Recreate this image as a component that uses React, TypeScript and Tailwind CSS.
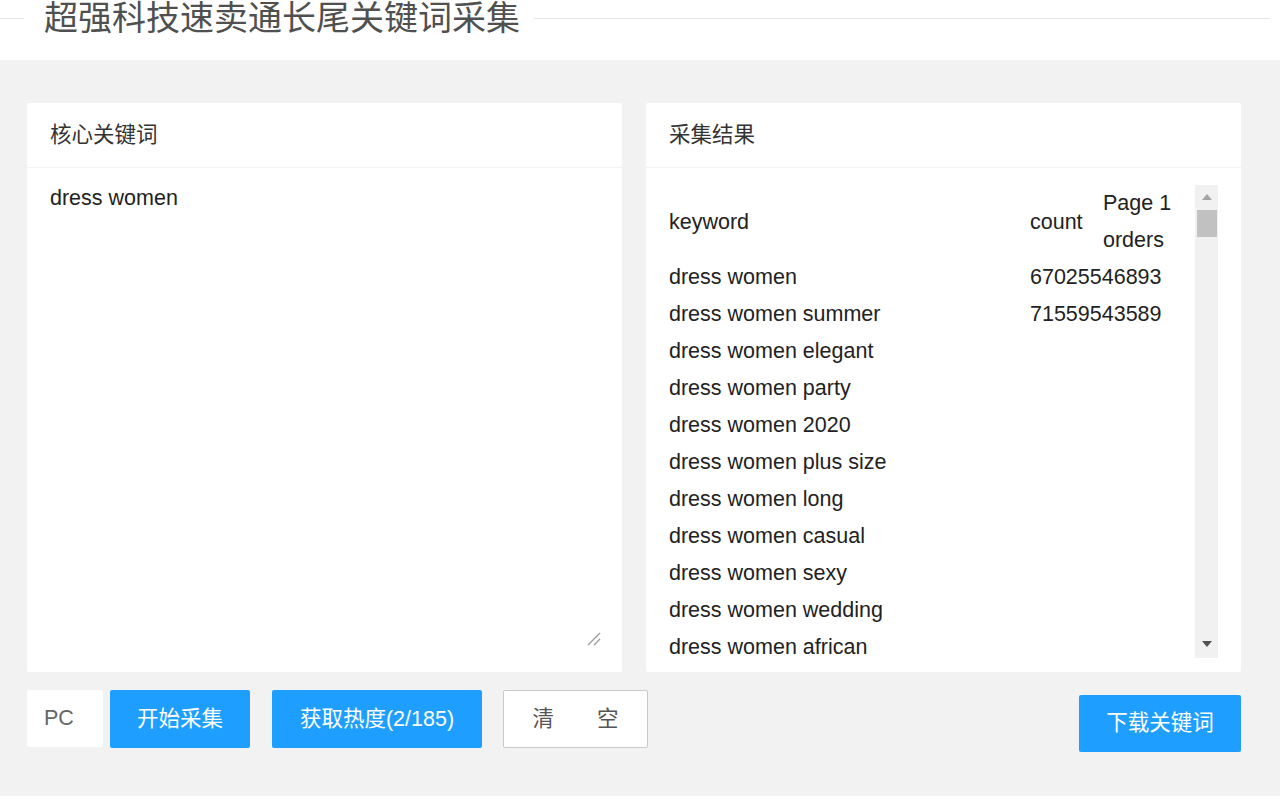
import React from "react";

const rows: [string, string][] = [
  ["dress women", "67025546893"],
  ["dress women summer", "71559543589"],
  ["dress women elegant", ""],
  ["dress women party", ""],
  ["dress women 2020", ""],
  ["dress women plus size", ""],
  ["dress women long", ""],
  ["dress women casual", ""],
  ["dress women sexy", ""],
  ["dress women wedding", ""],
  ["dress women african", ""],
];

export default function App() {
  return (
    <div
      className="w-[1280px] h-[800px] bg-white overflow-hidden text-[#333]"
      style={{ fontFamily: '"Liberation Sans", "Noto Sans CJK SC", sans-serif' }}
    >
      {/* header */}
      <div className="h-[60px] bg-white">
        <div className="flex items-center h-[37px]">
          <div className="w-[24px] h-px bg-[#e6e6e6]" />
          <div className="pl-[20px] pr-[14px] text-[34px] leading-[37px] text-[#505050] whitespace-nowrap">
            超强科技速卖通长尾关键词采集
          </div>
          <div className="flex-1 h-px bg-[#e6e6e6] mr-[10px]" />
        </div>
      </div>

      {/* main */}
      <div className="h-[736px] bg-[#f2f2f2] pt-[43px] px-[27px]">
        <div className="flex gap-[24px] w-[1214px]">
          {/* left card */}
          <div className="w-[595px] h-[569px] bg-white rounded-[2px] flex flex-col">
            <div className="h-[65px] border-b border-[#f3f3f3] px-[23px] flex items-center text-[21.5px] text-[#333]">
              核心关键词
            </div>
            <div className="relative flex-1 px-[23px] pt-[14px]">
              <div className="text-[21.5px] leading-[32px] text-[#222]">dress women</div>
              <svg
                className="absolute right-[20px] bottom-[25px]"
                width="16"
                height="16"
                viewBox="0 0 16 16"
              >
                <line x1="14" y1="2" x2="2" y2="14" stroke="#9a9a9a" strokeWidth="1.2" />
                <line x1="14" y1="8" x2="8" y2="14" stroke="#9a9a9a" strokeWidth="1.2" />
              </svg>
            </div>
          </div>

          {/* right card */}
          <div className="w-[595px] h-[569px] bg-white rounded-[2px] flex flex-col">
            <div className="h-[65px] border-b border-[#f3f3f3] px-[23px] flex items-center text-[21.5px] text-[#333]">
              采集结果
            </div>
            <div className="flex-1 pl-[23px] pt-[17px]">
              <div className="flex h-[473px]">
                <div className="w-[526px] overflow-hidden text-[21.5px] leading-[37px] text-[#222]">
                  <div className="flex">
                    <div className="w-[361px] flex items-center">keyword</div>
                    <div className="w-[73px] flex items-center">count</div>
                    <div className="flex-1">
                      <div>Page 1</div>
                      <div>orders</div>
                    </div>
                  </div>
                  {rows.map(([k, c], i) => (
                    <div key={i} className="flex whitespace-nowrap">
                      <div className="w-[361px]">{k}</div>
                      <div className="w-[73px]">{c}</div>
                      <div className="flex-1" />
                    </div>
                  ))}
                </div>
                {/* fake scrollbar */}
                <div className="w-[23px] h-[473px] bg-[#f1f1f1] flex flex-col items-center">
                  <div className="h-[23px] w-full flex items-center justify-center">
                    <svg width="10" height="6" viewBox="0 0 10 6">
                      <polygon points="5,0 10,6 0,6" fill="#a3a3a3" />
                    </svg>
                  </div>
                  <div className="w-[20px] h-[27px] bg-[#c1c1c1] mt-[2px]" />
                  <div className="flex-1" />
                  <div className="h-[27px] w-full flex items-center justify-center pb-[2px]">
                    <svg width="10" height="6" viewBox="0 0 10 6">
                      <polygon points="0,0 10,0 5,6" fill="#505050" />
                    </svg>
                  </div>
                </div>
              </div>
            </div>
          </div>
        </div>

        {/* buttons */}
        <div className="flex items-start mt-[18px] w-[1214px]">
          <div className="w-[76px] h-[57px] bg-white rounded-[2px] flex items-center pl-[17px] text-[21.5px] text-[#666]">
            PC
          </div>
          <button className="ml-[7px] w-[140px] h-[58px] bg-[#1e9fff] text-white rounded-[2px] text-[21.5px] flex items-center justify-center">
            开始采集
          </button>
          <button className="ml-[22px] w-[210px] h-[58px] bg-[#1e9fff] text-white rounded-[2px] text-[21.5px] flex items-center justify-center">
            获取热度(2/185)
          </button>
          <button className="ml-[21px] w-[145px] h-[58px] bg-white border border-[#c9c9c9] text-[#555] rounded-[2px] text-[21.5px] flex items-center justify-center whitespace-pre">
            清　　空
          </button>
          <button className="ml-auto mt-[5px] w-[162px] h-[57px] bg-[#1e9fff] text-white rounded-[2px] text-[21.5px] flex items-center justify-center">
            下载关键词
          </button>
        </div>
      </div>
    </div>
  );
}
